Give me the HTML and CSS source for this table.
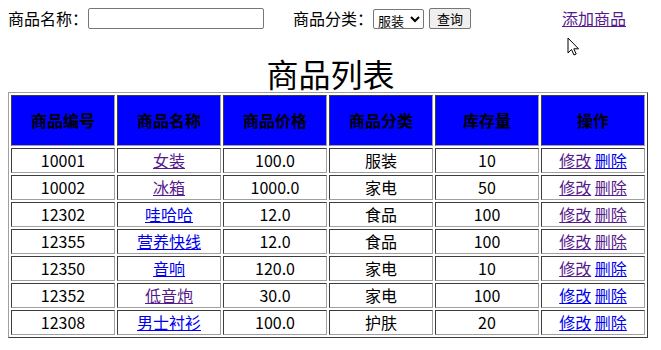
FILE: index.html
```html
<!DOCTYPE html>
<html>
<head>
<meta charset="utf-8">
<link rel="stylesheet" href="styles.css">
</head>
<body>
<div class="toolbar">
  <label class="lbl">商品名称：</label><input class="name-input" type="text">
  <label class="lbl lbl-cat">商品分类：</label><select class="cat-select"><option>服装</option><option>家电</option><option>食品</option><option>护肤</option></select><button class="query-btn">查询</button>
  <a class="add-link v" href="#">添加商品</a>
</div>
<svg class="cursor" width="14" height="20" viewBox="0 0 14 20"><path d="M1 1 L1 16 L4.5 12.5 L7 18 L9.2 17 L6.8 11.8 L11.5 11.8 Z" fill="#fff" stroke="#000" stroke-width="1" stroke-linejoin="miter"/></svg>
<h1 class="title">商品列表</h1>
<table class="goods">
  <thead>
    <tr><th>商品编号</th><th>商品名称</th><th>商品价格</th><th>商品分类</th><th>库存量</th><th>操作</th></tr>
  </thead>
  <tbody>
    <tr><td>10001</td><td><a class="v" href="#">女装</a></td><td>100.0</td><td>服装</td><td>10</td><td><a class="v" href="#">修改</a> <a href="#">删除</a></td></tr>
    <tr><td>10002</td><td><a class="v" href="#">冰箱</a></td><td>1000.0</td><td>家电</td><td>50</td><td><a class="v" href="#">修改</a> <a class="v" href="#">删除</a></td></tr>
    <tr><td>12302</td><td><a href="#">哇哈哈</a></td><td>12.0</td><td>食品</td><td>100</td><td><a class="v" href="#">修改</a> <a class="v" href="#">删除</a></td></tr>
    <tr><td>12355</td><td><a href="#">营养快线</a></td><td>12.0</td><td>食品</td><td>100</td><td><a class="v" href="#">修改</a> <a class="v" href="#">删除</a></td></tr>
    <tr><td>12350</td><td><a href="#">音响</a></td><td>120.0</td><td>家电</td><td>10</td><td><a class="v" href="#">修改</a> <a href="#">删除</a></td></tr>
    <tr><td>12352</td><td><a class="v" href="#">低音炮</a></td><td>30.0</td><td>家电</td><td>100</td><td><a href="#">修改</a> <a href="#">删除</a></td></tr>
    <tr><td>12308</td><td><a href="#">男士衬衫</a></td><td>100.0</td><td>护肤</td><td>20</td><td><a href="#">修改</a> <a href="#">删除</a></td></tr>
  </tbody>
</table>
</body>
</html>
```

FILE: styles.css
```css
body {
  margin: 8px;
  font-family: "Noto Sans CJK SC", "Noto Sans", sans-serif;
  font-size: 16px;
  color: #000;
  background: #fff;
  position: relative;
}
a { color: #0000ee; text-decoration: underline; }
a.v { color: #551a8b; }

.toolbar {
  display: flex;
  align-items: center;
  height: 21px;
  line-height: 21px;
  white-space: nowrap;
}
.lbl { display: inline-block; }
.lbl-cat { margin-left: 29px; }
.name-input {
  box-sizing: border-box;
  width: 176px;
  height: 21px;
  margin: 0;
  border: 1px solid #767676;
  border-radius: 2px;
  padding: 1px 2px;
}
.cat-select {
  box-sizing: border-box;
  width: 51px;
  height: 20px;
  margin: 0;
  font-family: "Noto Sans CJK SC", sans-serif;
  font-size: 13px;
  padding: 0;
  border: 1px solid #767676;
  border-radius: 2px;
  background: #fff;
}
.query-btn {
  box-sizing: border-box;
  width: 42px;
  height: 21px;
  margin-left: 5px;
  padding: 0;
  font-family: "Noto Sans CJK SC", sans-serif;
  font-size: 13px;
  line-height: 17px;
  border: 1px solid #767676;
  border-radius: 2px;
  background: #efefef;
}
.add-link { margin-left: 91px; }

.cursor {
  position: absolute;
  left: 559px;
  top: 29px;
}

.title {
  margin: 26px 0 1px;
  font-size: 32px;
  font-weight: normal;
  line-height: 36px;
  text-align: center;
}

.goods {
  width: 640px;
  border-collapse: separate;
  border-spacing: 2px;
  border: 1px solid;
  border-color: #a0a0a0 #3c3c3c #3c3c3c #a0a0a0;
  table-layout: fixed;
}
.goods th, .goods td {
  border: 1px solid;
  border-color: #3c3c3c #a0a0a0 #a0a0a0 #3c3c3c;
  text-align: center;
  padding: 1px;
}
.goods th {
  background: #0000ff;
  color: #000;
  height: 47px;
  font-weight: bold;
  line-height: 21px;
}
.goods td {
  height: 21px;
  line-height: 21px;
}
```
